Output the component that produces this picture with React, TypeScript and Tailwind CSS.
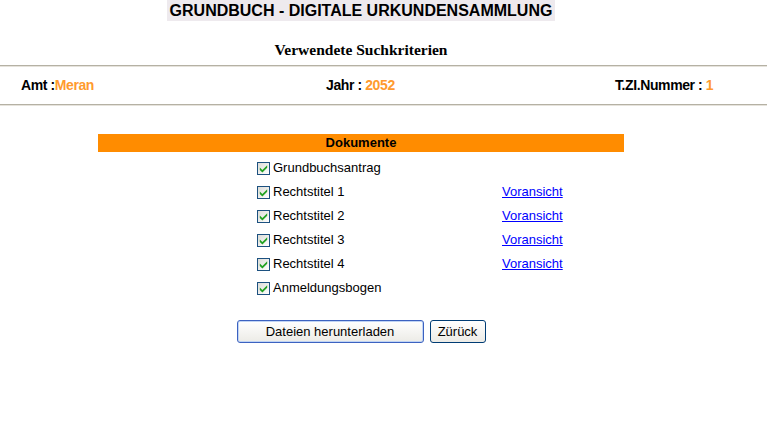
import React from "react";

const Check = () => (
  <span className="inline-flex h-[13px] w-[13px] items-center justify-center border border-[#1c5180] bg-gradient-to-br from-[#dcdcd7] to-white">
    <svg width="9" height="9" viewBox="0 0 9 9">
      <path d="M0.8 3.6 L3.4 6.1 L8.2 1.2 L8.2 3.8 L3.4 8.4 L0.8 5.9 Z" fill="#21a121" />
    </svg>
  </span>
);

const rows = [
  { label: "Grundbuchsantrag", link: false },
  { label: "Rechtstitel 1", link: true },
  { label: "Rechtstitel 2", link: true },
  { label: "Rechtstitel 3", link: true },
  { label: "Rechtstitel 4", link: true },
  { label: "Anmeldungsbogen", link: false },
];

export default function App() {
  return (
    <div className="h-[422px] w-[767px] bg-white font-['Liberation_Sans',Arial,sans-serif] text-black">
      <div className="flex w-[722px] justify-center">
        <h1 className="mt-0 bg-[#eeeaee] px-[3px] text-[16px] leading-[21px] font-bold">
          GRUNDBUCH - DIGITALE URKUNDENSAMMLUNG
        </h1>
      </div>
      <div className="mt-[20px] flex w-[722px] justify-center font-['Liberation_Serif','Times_New_Roman',serif] text-[15.5px] leading-[18px] font-bold">
        Verwendete Suchkriterien
      </div>
      <div className="mt-[6px] border-t border-b border-t-[#b5b1a4] border-b-[#e6e3dc]" />
      <div className="grid h-[37px] grid-cols-[326px_289px_1fr] items-center text-[14px] font-bold tracking-[-0.4px]">
        <div className="pl-[21px]">
          Amt :<span className="text-[#ff9a2e]">Meran</span>
        </div>
        <div>
          Jahr : <span className="text-[#ff9a2e]">2052</span>
        </div>
        <div>
          T.ZI.Nummer : <span className="text-[#ff9a2e]">1</span>
        </div>
      </div>
      <div className="border-t border-b border-t-[#b5b1a4] border-b-[#e6e3dc]" />
      <div className="ml-[98px] mt-[28px] w-[526px]">
        <div className="flex h-[18px] items-center justify-center bg-[#ff8c00] text-[13px] font-bold">
          Dokumente
        </div>
        <div className="mt-[4px] flex flex-col">
          {rows.map((r) => (
            <div key={r.label} className="grid h-[24px] grid-cols-[159px_245px_1fr] items-center text-[13px]">
              <div />
              <div className="flex items-center gap-[3px]">
                <Check />
                <span>{r.label}</span>
              </div>
              <div>
                {r.link && <a className="text-[#0000ff] underline" href="#">Voransicht</a>}
              </div>
            </div>
          ))}
        </div>
      </div>
      <div className="mt-[20px] flex w-[722px] justify-center gap-[6px]">
        <button className="h-[23px] w-[187px] rounded-[3px] border border-[#3c62c0] bg-gradient-to-b from-white to-[#ecebe6] text-[13px] shadow-[inset_0_0_0_1px_#c0d4f4]">
          Dateien herunterladen
        </button>
        <button className="h-[23px] w-[56px] rounded-[3px] border border-[#003c74] bg-gradient-to-b from-white to-[#ecebe6] text-[13px]">
          Zürück
        </button>
      </div>
    </div>
  );
}
